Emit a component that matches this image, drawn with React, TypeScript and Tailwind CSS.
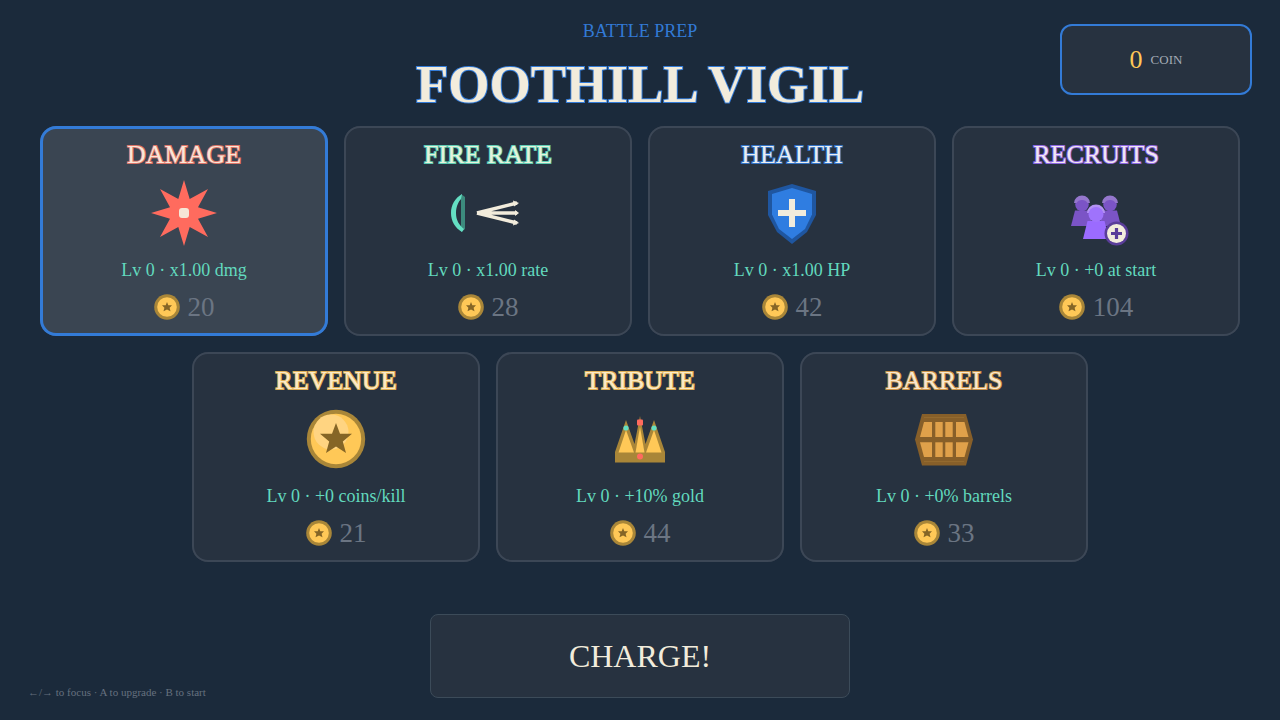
import type { ReactNode } from 'react'

type Upgrade = {
  id: string
  name: string
  nameClass: string
  level: string
  cost: number
  icon: ReactNode
}

function IconBox({ children }: { children: ReactNode }) {
  return (
    <svg width="80" height="70" viewBox="-40 -35 80 70" className="mt-1.5 block" aria-hidden="true">
      {children}
    </svg>
  )
}

function DamageIcon() {
  return (
    <IconBox>
      <polygon
        fill="#ff6b5e"
        points="0,-33 5.7,-14 24,-24 14,-5.7 33,0 14,5.7 24,24 5.7,14 0,33 -5.7,14 -24,24 -14,5.7 -33,0 -14,-5.7 -24,-24 -5.7,-14"
      />
      <rect x="-5" y="-5" width="10" height="10" rx="3" fill="#f6e6d6" />
    </IconBox>
  )
}

function FireRateIcon() {
  return (
    <IconBox>
      <polygon fill="#3c8b7d" points="-27,-19 -23,-16 -23,16 -27,19" />
      <path fill="#64dfc3" d="M-26 -19C-33 -15 -37 -8 -37 0S-33 15 -26 19L-24 16C-29 12 -32 7 -32 0S-29 -12 -27 -14Z" />
      <g stroke="#f2ecdc" strokeWidth="3.4">
        <path d="M-11 0L29 -10M-11 0H29M-11 0L29 10" />
      </g>
      <g fill="#f2ecdc">
        <polygon points="25,-12.5 31,-10 26,-6.5" />
        <polygon points="27,-3 31,0 27,3" />
        <polygon points="25,12.5 31,10 26,6.5" />
      </g>
    </IconBox>
  )
}

function HealthIcon() {
  return (
    <IconBox>
      <polygon fill="#1f56a0" points="0,-29 24,-22 24,2 15,19 0,31 -15,19 -24,2 -24,-22" />
      <polygon fill="#2f7de1" points="0,-25 20,-19 20,1.5 13,16 0,26 -13,16 -20,1.5 -20,-19" />
      <path fill="#f2ecdc" d="M-3 -14H3V-3H14V3H3V14H-3V3H-14V-3H-3Z" />
    </IconBox>
  )
}

function BackRecruit() {
  return (
    <>
      <circle cy="-8.5" r="6.8" fill="#7b54c6" />
      <path d="M-8 -10A8 7.5 0 0 1 8 -10H5.5A6 5 0 0 0 -5.5 -10Z" fill="#9577cd" />
      <polygon points="-7,-2.5 7,-2.5 11,13 -11,13" fill="#7b54c6" />
    </>
  )
}

function RecruitsIcon() {
  return (
    <IconBox>
      <g transform="translate(-14 0)">
        <BackRecruit />
      </g>
      <g transform="translate(14 0)">
        <BackRecruit />
      </g>
      <polygon points="-8.5,8 8.5,8 13,26 -13,26" fill="#9b6bff" />
      <path d="M-9 0A9 8.5 0 0 1 9 0Z" fill="#b492f4" />
      <circle cy="1.5" r="7.5" fill="#9f73fc" />
      <circle cx="20.5" cy="20.5" r="12" fill="#5a3d99" />
      <circle cx="20.5" cy="20.5" r="9.5" fill="#f2ecdc" />
      <path d="M20.5 15V26M15 20.5H26" stroke="#5a3d99" strokeWidth="3.2" />
    </IconBox>
  )
}

function RevenueIcon() {
  return (
    <IconBox>
      <circle r="29.2" fill="#a98638" />
      <circle r="25.2" fill="#ffc857" />
      <circle cx="-5" cy="-7" r="17.5" fill="#ffd481" />
      <polygon
        fill="#856526"
        points="0,-16 4,-5.3 16,-5.3 6.8,2.5 10,14 0,7.5 -10,14 -6.8,2.5 -16,-5.3 -4,-5.3"
      />
    </IconBox>
  )
}

function TributeIcon() {
  return (
    <IconBox>
      <polygon fill="#a98638" points="-25,23.5 -25,13 -14,-19 -5.5,5 0,-23 5.5,5 14,-19 25,13 25,23.5" />
      <g fill="#ffc857">
        <polygon points="-14,-9 -6,13.5 -21.5,13.5" />
        <polygon points="0,-12 4.5,13.5 -4.5,13.5" />
        <polygon points="14,-9 21.5,13.5 6,13.5" />
      </g>
      <rect x="-3" y="-19.5" width="6" height="6" rx="1" fill="#ff6b5e" />
      <circle cx="-14" cy="-11" r="2.6" fill="#64dfc3" />
      <circle cx="14" cy="-11" r="2.6" fill="#64dfc3" />
      <circle cy="17.5" r="3" fill="#ff6b5e" />
    </IconBox>
  )
}

function BarrelsIcon() {
  return (
    <IconBox>
      <polygon fill="#875f29" points="-22,-25 22,-25 29,0.5 22,26.5 -22,26.5 -29,0.5" />
      <g fill="#e0a14a">
        <polygon points="-20,-17 -12,-17 -12,-2 -24,-2" />
        <rect x="-8.7" y="-17" width="7.4" height="15" />
        <rect x="1.3" y="-17" width="7.4" height="15" />
        <polygon points="12,-17 20.5,-17 24.5,-2 12,-2" />
        <polygon points="-24,3.3 -12,3.3 -12,18 -20,18" />
        <rect x="-8.7" y="3.3" width="7.4" height="14.7" />
        <rect x="1.3" y="3.3" width="7.4" height="14.7" />
        <polygon points="12,3.3 24.5,3.3 20.5,18 12,18" />
      </g>
      <path d="M-20 -21.5H20M-20 22.5H20" stroke="#946a2e" strokeWidth="1" />
    </IconBox>
  )
}

function Coin() {
  return (
    <svg width="26" height="26" viewBox="-13 -13 26 26" aria-hidden="true">
      <circle r="12.8" fill="#a98638" />
      <circle r="9.8" fill="#ffc857" />
      <polygon
        fill="#856526"
        points="0,-5 1.3,-1.8 5,-1.8 2.6,0.8 3.5,4.2 0,2.6 -3.5,4.2 -2.6,0.8 -5,-1.8 -1.3,-1.8"
      />
    </svg>
  )
}

const upgrades: Upgrade[] = [
  {
    id: 'damage',
    name: 'DAMAGE',
    nameClass: 'text-[#f9e6d8] [-webkit-text-stroke:2px_#dc7468]',
    level: 'Lv 0 · x1.00 dmg',
    cost: 20,
    icon: <DamageIcon />,
  },
  {
    id: 'fire-rate',
    name: 'FIRE RATE',
    nameClass: 'text-[#e6f3dc] [-webkit-text-stroke:2px_#5fcbb3]',
    level: 'Lv 0 · x1.00 rate',
    cost: 28,
    icon: <FireRateIcon />,
  },
  {
    id: 'health',
    name: 'HEALTH',
    nameClass: 'text-[#e9eef2] [-webkit-text-stroke:2px_#3372c4]',
    level: 'Lv 0 · x1.00 HP',
    cost: 42,
    icon: <HealthIcon />,
  },
  {
    id: 'recruits',
    name: 'RECRUITS',
    nameClass: 'text-[#f1e6f2] [-webkit-text-stroke:2px_#8c66df]',
    level: 'Lv 0 · +0 at start',
    cost: 104,
    icon: <RecruitsIcon />,
  },
  {
    id: 'revenue',
    name: 'REVENUE',
    nameClass: 'text-[#fbeac8] [-webkit-text-stroke:2px_#dfb057]',
    level: 'Lv 0 · +0 coins/kill',
    cost: 21,
    icon: <RevenueIcon />,
  },
  {
    id: 'tribute',
    name: 'TRIBUTE',
    nameClass: 'text-[#fbeac8] [-webkit-text-stroke:2px_#dfb057]',
    level: 'Lv 0 · +10% gold',
    cost: 44,
    icon: <TributeIcon />,
  },
  {
    id: 'barrels',
    name: 'BARRELS',
    nameClass: 'text-[#f8e8cf] [-webkit-text-stroke:2px_#cb944a]',
    level: 'Lv 0 · +0% barrels',
    cost: 33,
    icon: <BarrelsIcon />,
  },
]

function UpgradeCard({ upgrade, focused }: { upgrade: Upgrade; focused: boolean }) {
  return (
    <button
      type="button"
      className={`flex w-[calc((100%-48px)/4)] flex-col items-center rounded-2xl pt-3 pb-3.5 ${
        focused
          ? 'bg-[#3a4552] inset-ring-3 inset-ring-[#337bd7]'
          : 'bg-[#273240] inset-ring-2 inset-ring-[#3c4756]'
      }`}
    >
      <span className={`text-[26px] leading-[34px] [paint-order:stroke_fill] ${upgrade.nameClass}`}>
        {upgrade.name}
      </span>
      {upgrade.icon}
      <span className="mt-2.5 text-lg leading-6 text-[#62d9be]">{upgrade.level}</span>
      <span className="mt-2.5 flex items-center gap-2 text-[27px] leading-[30px] text-[#6b7583]">
        <Coin />
        {upgrade.cost}
      </span>
    </button>
  )
}

export default function App() {
  const focusedId = 'damage'

  return (
    <div className="flex min-h-screen flex-col bg-[#1b2a3b] font-['Liberation_Serif',serif]">
      <header className="grid grid-cols-[1fr_auto_1fr] items-start px-7 pt-5">
        <div className="col-start-2 text-center">
          <p className="text-lg leading-[22px] text-[#3279d5]">BATTLE PREP</p>
          <h1 className="mt-3 text-[53px] leading-[60px] font-bold text-[#f2ecdc] [-webkit-text-stroke:2px_#337bd7] [paint-order:stroke_fill]">
            FOOTHILL VIGIL
          </h1>
        </div>
        <div className="mt-1 flex h-[71px] w-48 items-center justify-center gap-2 justify-self-end rounded-xl border-2 border-[#337bd7] bg-[#273240]">
          <span className="text-[26px] leading-8 text-[#ffc857]">0</span>
          <span className="text-[13px] leading-4 text-[#a3abb5]">COIN</span>
        </div>
      </header>

      <main className="mt-3 flex flex-wrap justify-center gap-4 px-10">
        {upgrades.map((upgrade) => (
          <UpgradeCard key={upgrade.id} upgrade={upgrade} focused={upgrade.id === focusedId} />
        ))}
      </main>

      <footer className="mt-auto grid grid-cols-[1fr_auto_1fr] items-end px-7 pt-6 pb-[22px]">
        <p className="text-[11px] leading-3 text-[#66717f]">←/→ to focus · A to upgrade · B to start</p>
        <button
          type="button"
          className="h-[84px] w-[420px] rounded-lg border border-[#3c4b59] bg-[#273240] text-[32px] text-[#f2ecdc]"
        >
          CHARGE!
        </button>
      </footer>
    </div>
  )
}
